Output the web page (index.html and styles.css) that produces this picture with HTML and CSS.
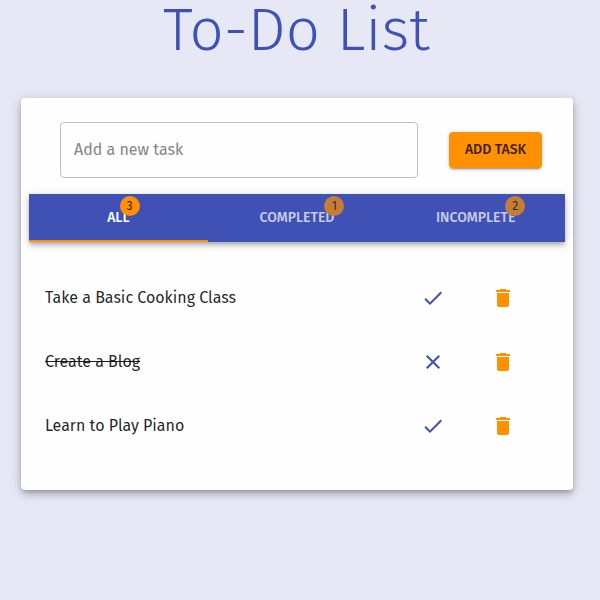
FILE: index.html
```html
<!DOCTYPE html>
<html lang="en">
<head>
<meta charset="utf-8">
<title>To-Do List</title>
<link rel="stylesheet" href="styles.css">
</head>
<body>
<h1 class="title">To-Do List</h1>
<main class="card">
  <form class="add-form">
    <input class="task-input" type="text" placeholder="Add a new task" aria-label="Add a new task">
    <button class="add-button" type="button">ADD TASK</button>
  </form>
  <nav class="tabs">
    <a class="tab selected"><span class="label">ALL<span class="badge">3</span></span></a>
    <a class="tab"><span class="label">COMPLETED<span class="badge">1</span></span></a>
    <a class="tab"><span class="label">INCOMPLETE<span class="badge">2</span></span></a>
  </nav>
  <ul class="tasks">
    <li class="task">
      <span class="name">Take a Basic Cooking Class</span>
      <svg class="icon toggle" viewBox="0 0 24 24"><path d="M9 16.170L4.830 12l-1.420 1.410L9 19 21 7l-1.410-1.410z"/></svg>
      <svg class="icon delete" viewBox="0 0 24 24"><path d="M6 19c0 1.100.9 2 2 2h8c1.100 0 2-.9 2-2V7H6v12zM19 4h-3.500l-1-1h-5l-1 1H5v2h14V4z"/></svg>
    </li>
    <li class="task">
      <span class="name done">Create a Blog</span>
      <svg class="icon toggle" viewBox="0 0 24 24"><path d="M19 6.410L17.590 5 12 10.590 6.410 5 5 6.410 10.590 12 5 17.590 6.410 19 12 13.410 17.590 19 19 17.590 13.410 12z"/></svg>
      <svg class="icon delete" viewBox="0 0 24 24"><path d="M6 19c0 1.100.9 2 2 2h8c1.100 0 2-.9 2-2V7H6v12zM19 4h-3.500l-1-1h-5l-1 1H5v2h14V4z"/></svg>
    </li>
    <li class="task">
      <span class="name">Learn to Play Piano</span>
      <svg class="icon toggle" viewBox="0 0 24 24"><path d="M9 16.170L4.830 12l-1.420 1.410L9 19 21 7l-1.410-1.410z"/></svg>
      <svg class="icon delete" viewBox="0 0 24 24"><path d="M6 19c0 1.100.9 2 2 2h8c1.100 0 2-.9 2-2V7H6v12zM19 4h-3.500l-1-1h-5l-1 1H5v2h14V4z"/></svg>
    </li>
  </ul>
</main>
</body>
</html>
```
FILE: styles.css
```css
* {
  box-sizing: border-box;
}

body {
  margin: 0;
  height: 600px;
  overflow: hidden;
  background: #e6e9f5;
  color: rgba(0, 0, 0, 0.87);
  font-family: "Fira Sans", "Noto Sans", sans-serif;
  font-size: 16px;
}

.title {
  margin: 0 0 28px 163px;
  height: 70px;
  color: #3f51b5;
  font-size: 60px;
  font-weight: 300;
  line-height: 60px;
  white-space: nowrap;
}

.card {
  width: 552px;
  height: 392px;
  margin-left: 21px;
  padding: 24px 8px 0;
  border-radius: 4px;
  background: #fefefe;
  box-shadow: 0 3px 5px -1px rgba(0, 0, 0, 0.2), 0 5px 8px rgba(0, 0, 0, 0.14), 0 1px 14px rgba(0, 0, 0, 0.12);
}

.add-form {
  display: flex;
  align-items: center;
  gap: 31px;
  height: 56px;
  margin: 0 0 16px 31px;
}

.task-input {
  width: 358px;
  height: 56px;
  padding: 0 13px 1px;
  border: 1px solid #c0c0c0;
  border-radius: 4px;
  background: transparent;
  font: 400 16px "Fira Sans", "Noto Sans", sans-serif;
}

.task-input::placeholder {
  color: #858585;
  opacity: 1;
}

.add-button {
  width: 93px;
  height: 36px;
  padding: 0 0 2px;
  border: 0;
  border-radius: 4px;
  background: #ff9100;
  box-shadow: 0 3px 1px -2px rgba(0, 0, 0, 0.2), 0 2px 2px rgba(0, 0, 0, 0.14), 0 1px 5px rgba(0, 0, 0, 0.12);
  color: rgba(0, 0, 0, 0.8);
  font: 500 14px "Fira Sans", "Noto Sans", sans-serif;
  white-space: nowrap;
}

.tabs {
  display: grid;
  grid-template-columns: repeat(3, 1fr);
  height: 48px;
  background: #3f51b5;
  box-shadow: 0 2px 4px -1px rgba(0, 0, 0, 0.2), 0 4px 5px rgba(0, 0, 0, 0.14), 0 1px 10px rgba(0, 0, 0, 0.12);
}

.tab {
  display: flex;
  align-items: center;
  justify-content: center;
  padding-top: 1px;
  border-bottom: 2px solid transparent;
  color: #fff;
  font-size: 14px;
  font-weight: 500;
  line-height: 20px;
}

.tab:not(.selected) .label {
  opacity: 0.7;
}

.selected {
  border-color: #ff9100;
}

.label {
  position: relative;
}

.badge {
  position: absolute;
  top: -12px;
  right: -10px;
  width: 20px;
  height: 20px;
  border-radius: 50%;
  background: #ff9100;
  color: rgba(0, 0, 0, 0.87);
  font-size: 12px;
  font-weight: 400;
  line-height: 20px;
  text-align: center;
}

.tasks {
  margin: 24px 0 0;
  padding: 0 50px 0 16px;
  list-style: none;
}

.task {
  display: flex;
  align-items: center;
  height: 64px;
}

.name {
  flex: 1;
  padding-bottom: 2px;
  white-space: nowrap;
}

.done {
  text-decoration: line-through;
}

.icon {
  width: 24px;
  height: 24px;
}

.toggle {
  margin-right: 46px;
  fill: #3f51b5;
}

.delete {
  fill: #ff9100;
}
```
